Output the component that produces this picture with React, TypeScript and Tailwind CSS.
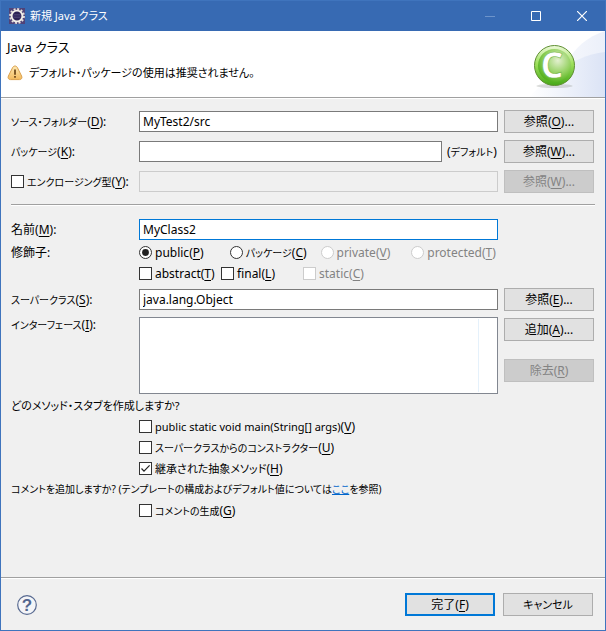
import { ButtonHTMLAttributes, InputHTMLAttributes, ReactNode } from "react";
import clsx from "clsx";

interface MnemonicProps {
   text: string;
   k: string;
   after?: string;
   size?: "sm" | "md" | "base";
}

const textSizes = {
   sm: "text-[10px]",
   md: "text-[11px]",
   base: "text-[12px]",
};

const Mnemonic: React.FC<MnemonicProps> = ({
   text,
   k,
   after = "",
   size = "base",
}) => (
   <span className="whitespace-nowrap">
      <span className={textSizes[size]}>{text}</span>(
      <span className="underline underline-offset-2">{k}</span>){after}
   </span>
);

const Button: React.FC<
   ButtonHTMLAttributes<HTMLButtonElement> & { primary?: boolean }
> = ({ primary, className, ...props }) => (
   <button
      type="button"
      className={clsx(
         "flex h-[23px] w-[90px] items-center justify-center bg-[#e1e1e1] disabled:border-[#bfbfbf] disabled:bg-[#cccccc] disabled:text-[#838383]",
         primary ? "border-2 border-[#0078d7]" : "border border-[#adadad]",
         className,
      )}
      {...props}
   />
);

const TextField: React.FC<
   InputHTMLAttributes<HTMLInputElement> & { active?: boolean }
> = ({ active, ...props }) => (
   <input
      type="text"
      className={clsx(
         "h-[21px] w-full min-w-0 border bg-white px-[3px] outline-none focus:border-[#0078d7] disabled:border-[#cccccc] disabled:bg-[#f0f0f0]",
         active ? "border-[#0078d7]" : "border-[#7a7a7a]",
      )}
      {...props}
   />
);

interface OptionProps {
   type?: "checkbox" | "radio";
   name?: string;
   checked?: boolean;
   disabled?: boolean;
   children: ReactNode;
}

const Option: React.FC<OptionProps> = ({
   type = "checkbox",
   name,
   checked,
   disabled,
   children,
}) => (
   <label
      className={clsx(
         "flex h-[21px] items-center gap-[3px]",
         disabled && "text-[#838383]",
      )}
   >
      <span className="relative size-[13px] shrink-0">
         <input
            type={type}
            name={name}
            defaultChecked={checked}
            disabled={disabled}
            className={clsx(
               "peer block size-[13px] appearance-none border border-[#333333] bg-white disabled:border-[#cccccc]",
               type === "radio" && "rounded-full",
            )}
         />
         <svg
            viewBox="0 0 13 13"
            className="pointer-events-none absolute inset-0 hidden size-[13px] peer-checked:block"
         >
            {type === "radio" ? (
               <circle cx="6.5" cy="6.5" r="3.4" fill="#222" />
            ) : (
               <path
                  d="M2.5 6.5 5 9.2 10.6 3.4"
                  fill="none"
                  stroke="#222"
                  strokeWidth="1.2"
               />
            )}
         </svg>
      </span>
      {children}
   </label>
);

const EclipseIcon = () => (
   <svg viewBox="0 0 16 16" className="size-4">
      <rect width="16" height="16" fill="#4f4379" />
      <circle
         cx="8"
         cy="8"
         r="7"
         fill="none"
         stroke="#e6e2dc"
         strokeWidth="1.8"
         strokeDasharray="2 1.665"
      />
      <circle
         cx="8"
         cy="8"
         r="5.4"
         fill="#2c2255"
         stroke="#f3f0ea"
         strokeWidth="1.9"
      />
      <path d="M4.500 6.500h7M4 8h8M4.500 9.500h7" stroke="#5d5688" strokeWidth=".5" />
   </svg>
);

const WarningIcon = () => (
   <svg viewBox="0 0 16 16" className="size-4 shrink-0">
      <defs>
         <linearGradient id="warn" x1="0" y1="0" x2="0" y2="1">
            <stop offset="0" stopColor="#fdeab5" />
            <stop offset="1" stopColor="#f3b95c" />
         </linearGradient>
      </defs>
      <path
         d="M8 1c1.300 0 2 .8 2.600 2l4 8c.9 2-.1 3.600-2.100 3.600h-9C1.500 14.600.5 13 1.400 11l4-8C6 1.800 6.700 1 8 1Z"
         fill="url(#warn)"
         stroke="#dba04c"
      />
      <path d="M8 4.500v5.200M8 11v1.700" stroke="#6b4518" strokeWidth="1.700" />
   </svg>
);

const BannerArt = () => (
   <svg
      viewBox="0 0 106 66"
      className="absolute top-0 right-0 h-[66px] w-[106px]"
   >
      <defs>
         <linearGradient
            id="sky"
            gradientUnits="userSpaceOnUse"
            x1="30"
            y1="0"
            x2="106"
            y2="0"
         >
            <stop offset="0" stopColor="#ffffff" />
            <stop offset="1" stopColor="#dbe3f5" />
         </linearGradient>
         <linearGradient id="rim" x1="0" y1="0" x2="0" y2="1">
            <stop offset="0" stopColor="#eefadb" />
            <stop offset=".45" stopColor="#9ee05c" />
            <stop offset="1" stopColor="#46a817" />
         </linearGradient>
         <radialGradient id="ball" cx=".6" cy=".35" r=".7">
            <stop offset="0" stopColor="#e3f0cf" />
            <stop offset=".6" stopColor="#8fcf5a" />
            <stop offset="1" stopColor="#4cae17" />
         </radialGradient>
      </defs>
      <path d="M106 0C88 6 76 16 66 34v32h40Z" fill="url(#sky)" opacity=".55" />
      <path d="M106 21C88 23 72 31 54 42L30 66h76Z" fill="url(#sky)" />
      <ellipse cx="55.500" cy="55" rx="18" ry="2" fill="#a4a8a4" opacity=".4" />
      <circle cx="55.500" cy="34.500" r="20" fill="url(#rim)" stroke="#5f8f33" />
      <circle cx="55.500" cy="34.500" r="16.500" fill="url(#ball)" />
      <text
         x="53"
         y="47"
         textAnchor="middle"
         fontSize="36"
         fontWeight="700"
         fill="#fff"
         stroke="#74b544"
         strokeWidth=".6"
         className="font-['Open_Sans',sans-serif]"
      >
         C
      </text>
   </svg>
);

export default function App() {
   return (
      <div className="flex min-h-screen flex-col border border-[#3f74bd] bg-[#f0f0f0] font-['Noto_Sans','Noto_Sans_CJK_JP',sans-serif] text-[12px] leading-[16px] text-black [font-feature-settings:'palt']">
         <header className="flex h-[30px] items-center bg-[#376ab3] pl-2 text-white">
            <EclipseIcon />
            <h1 className="ml-[5px] flex-1 text-[11px]">新規 Java クラス</h1>
            <button
               type="button"
               aria-label="最小化"
               disabled
               className="flex h-full w-[46px] items-center justify-center"
            >
               <svg viewBox="0 0 10 10" className="size-[10px]">
                  <path d="M0 5.500h10" stroke="#6d94cb" />
               </svg>
            </button>
            <button
               type="button"
               aria-label="最大化"
               className="flex h-full w-[46px] items-center justify-center"
            >
               <svg viewBox="0 0 10 10" className="size-[10px]">
                  <path d="M.5.5h9v9h-9Z" fill="none" stroke="#fff" />
               </svg>
            </button>
            <button
               type="button"
               aria-label="閉じる"
               className="flex h-full w-[46px] items-center justify-center"
            >
               <svg viewBox="0 0 10 10" className="size-[10px]">
                  <path d="m0 0 10 10M10 0 0 10" stroke="#fff" strokeWidth="1.200" />
               </svg>
            </button>
         </header>

         <section className="relative h-[67px] border-b border-[#a0a0a0] bg-white pt-2 pl-[6px]">
            <BannerArt />
            <h2 className="text-[13px]">Java クラス</h2>
            <p className="mt-[10px] flex items-center gap-[6px] text-[11px]">
               <WarningIcon />
               デフォルト・パッケージの使用は推奨されません。
            </p>
         </section>

         <main className="flex-1 border-t border-white px-[10px] pt-[11px]">
            <div className="grid grid-cols-[122px_1fr_90px] items-center gap-x-[6px] gap-y-[7px] pr-px">
               <label htmlFor="folder">
                  <Mnemonic
                     text="ソース・フォルダー"
                     k="D"
                     after=":"
                     size="sm"
                  />
               </label>
               <TextField id="folder" defaultValue="MyTest2/src" />
               <Button>
                  <Mnemonic text="参照" k="O" after="..." />
               </Button>

               <label htmlFor="package">
                  <Mnemonic text="パッケージ" k="K" after=":" size="sm" />
               </label>
               <div className="flex items-center gap-[5px]">
                  <TextField id="package" />
                  <span className="w-[51px] shrink-0 whitespace-nowrap">
                     (<span className="text-[10px]">デフォルト</span>)
                  </span>
               </div>
               <Button>
                  <Mnemonic text="参照" k="W" after="..." />
               </Button>

               <Option>
                  <Mnemonic
                     text="エンクロージング型"
                     k="Y"
                     after=":"
                     size="sm"
                  />
               </Option>
               <TextField aria-label="エンクロージング型" disabled />
               <Button disabled>
                  <Mnemonic text="参照" k="W" after="..." />
               </Button>
            </div>

            <hr className="mt-[11px] h-[2px] border-t border-b border-t-[#a0a0a0] border-b-white" />

            <div className="mt-[13px] grid grid-cols-[122px_1fr_90px] items-center gap-x-[6px] pr-px">
               <label htmlFor="name">
                  <Mnemonic text="名前" k="M" after=":" />
               </label>
               <TextField id="name" defaultValue="MyClass2" active />
               <span />

               <span className="self-start pt-[5px]">修飾子:</span>
               <div className="py-[2px]">
                  <div className="grid grid-cols-4 gap-x-1">
                     <Option type="radio" name="access" checked>
                        <Mnemonic text="public" k="P" />
                     </Option>
                     <Option type="radio" name="access">
                        <Mnemonic text="パッケージ" k="C" size="sm" />
                     </Option>
                     <Option type="radio" name="access" disabled>
                        <Mnemonic text="private" k="V" />
                     </Option>
                     <Option type="radio" name="access" disabled>
                        <Mnemonic text="protected" k="T" />
                     </Option>
                  </div>
                  <div className="grid grid-cols-[82px_82px_82px]">
                     <Option>
                        <Mnemonic text="abstract" k="T" />
                     </Option>
                     <Option>
                        <Mnemonic text="final" k="L" />
                     </Option>
                     <Option disabled>
                        <Mnemonic text="static" k="C" />
                     </Option>
                  </div>
               </div>
               <span />
            </div>

            <div className="mt-[2px] grid grid-cols-[122px_1fr_90px] items-center gap-x-[6px] gap-y-[6px] pr-px">
               <label htmlFor="super">
                  <Mnemonic text="スーパークラス" k="S" after=":" size="sm" />
               </label>
               <TextField id="super" defaultValue="java.lang.Object" />
               <Button>
                  <Mnemonic text="参照" k="E" after="..." />
               </Button>

               <span id="interfaces" className="self-start">
                  <Mnemonic text="インターフェース" k="I" after=":" size="sm" />
               </span>
               <div
                  role="listbox"
                  aria-labelledby="interfaces"
                  tabIndex={0}
                  className="h-[77px] border border-[#828790] bg-white py-px pr-[18px]"
               >
                  <div className="h-full border-r border-[#e5f1fb]" />
               </div>
               <div className="flex flex-col gap-[18px] self-start pt-px">
                  <Button>
                     <Mnemonic text="追加" k="A" after="..." />
                  </Button>
                  <Button disabled>
                     <Mnemonic text="除去" k="R" />
                  </Button>
               </div>
            </div>

            <fieldset className="mt-px">
               <legend className="h-[21px] text-[11px] leading-[21px]">
                  どのメソッド・スタブを作成しますか?
               </legend>
               <div className="pl-32">
                  <Option>
                     <Mnemonic
                        text="public static void main(String[] args)"
                        k="V"
                        size="md"
                     />
                  </Option>
                  <Option>
                     <Mnemonic
                        text="スーパークラスからのコンストラクター"
                        k="U"
                        size="sm"
                     />
                  </Option>
                  <Option checked>
                     <Mnemonic text="継承された抽象メソッド" k="H" size="md" />
                  </Option>
               </div>
            </fieldset>
            <p className="text-[10px] leading-[21px]">
               コメントを追加しますか? (テンプレートの構成およびデフォルト値については
               <a href="#templates" className="text-[#0066cc] underline">
                  ここ
               </a>
               を参照)
            </p>
            <div className="pl-32">
               <Option>
                  <Mnemonic text="コメントの生成" k="G" size="sm" />
               </Option>
            </div>
         </main>

         <footer className="border-t border-[#a0a0a0]">
            <div className="flex items-center gap-2 border-t border-white py-[14px] pr-3 pl-4">
               <button type="button" aria-label="ヘルプ" className="mr-auto">
                  <svg
                     viewBox="0 0 20 20"
                     className="block size-5 overflow-visible"
                  >
                     <circle
                        cx="10"
                        cy="10"
                        r="9.300"
                        fill="#f4f5f8"
                        stroke="#586a91"
                        strokeWidth="1.200"
                     />
                     <text
                        x="10"
                        y="16"
                        textAnchor="middle"
                        fontSize="17"
                        fontWeight="700"
                        fill="#52658f"
                        className="font-['Liberation_Sans',sans-serif]"
                     >
                        ?
                     </text>
                  </svg>
               </button>
               <Button primary>
                  <Mnemonic text="完了" k="F" />
               </Button>
               <Button>
                  <span className="text-[11px]">キャンセル</span>
               </Button>
            </div>
         </footer>
      </div>
   );
}
